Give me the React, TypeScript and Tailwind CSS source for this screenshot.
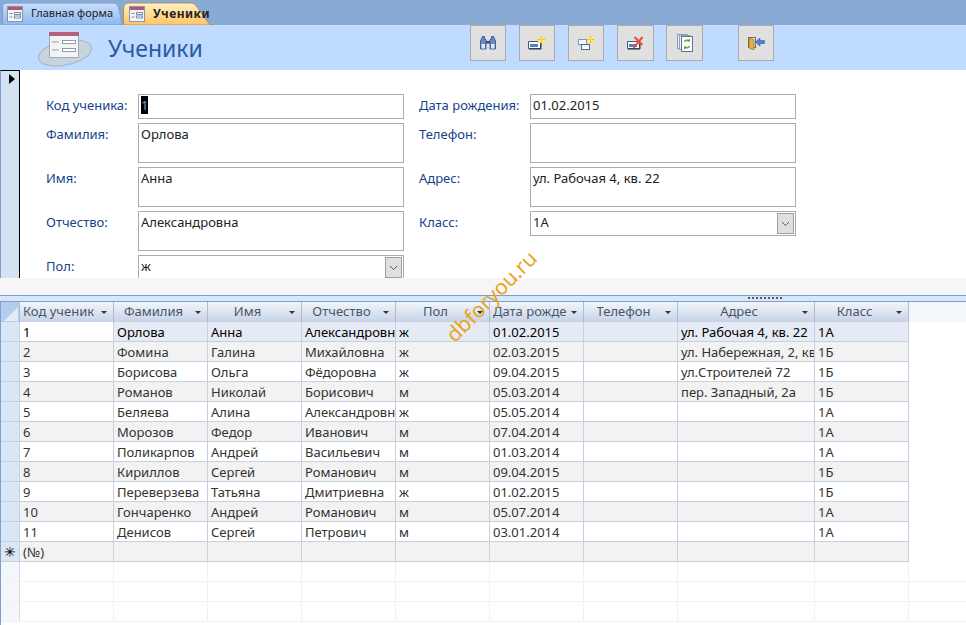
const font = { fontFamily: '"Noto Sans", sans-serif' };

const columns = [
  { title: "Код ученик", w: "w-[94px]", left: true },
  { title: "Фамилия", w: "w-[94px]" },
  { title: "Имя", w: "w-[94px]" },
  { title: "Отчество", w: "w-[94px]" },
  { title: "Пол", w: "w-[94px]" },
  { title: "Дата рожде", w: "w-[94px]", left: true },
  { title: "Телефон", w: "w-[94px]" },
  { title: "Адрес", w: "w-[137px]" },
  { title: "Класс", w: "w-[94px]" },
];

const rows = [
  ["1", "Орлова", "Анна", "Александровна", "ж", "01.02.2015", "", "ул. Рабочая 4, кв. 22", "1А"],
  ["2", "Фомина", "Галина", "Михайловна", "ж", "02.03.2015", "", "ул. Набережная, 2, кв. 5", "1Б"],
  ["3", "Борисова", "Ольга", "Фёдоровна", "ж", "09.04.2015", "", "ул.Строителей 72", "1Б"],
  ["4", "Романов", "Николай", "Борисович", "м", "05.03.2014", "", "пер. Западный, 2а", "1Б"],
  ["5", "Беляева", "Алина", "Александровна", "ж", "05.05.2014", "", "", "1А"],
  ["6", "Морозов", "Федор", "Иванович", "м", "07.04.2014", "", "", "1А"],
  ["7", "Поликарпов", "Андрей", "Васильевич", "м", "01.03.2014", "", "", "1А"],
  ["8", "Кириллов", "Сергей", "Романович", "м", "09.04.2015", "", "", "1Б"],
  ["9", "Переверзева", "Татьяна", "Дмитриевна", "ж", "01.02.2015", "", "", "1Б"],
  ["10", "Гончаренко", "Андрей", "Романович", "м", "05.07.2014", "", "", "1А"],
  ["11", "Денисов", "Сергей", "Петрович", "м", "03.01.2014", "", "", "1А"],
];

function FormIcon({ size = 16 }: { size?: number }) {
  return (
    <svg width={size} height={size} viewBox="0 0 16 16">
      <rect x="0.5" y="0.5" width="15" height="15" fill="#f4f5f8" stroke="#8d93a8" />
      <rect x="1" y="1" width="14" height="3" fill="#b3566f" />
      <path d="M2.5 7.5h3M2.5 11h3" stroke="#7d8fa8" />
      <rect x="7.5" y="6.5" width="6" height="2" fill="#fff" stroke="#7d8fa8" />
      <rect x="7.5" y="10" width="6" height="2" fill="#fff" stroke="#7d8fa8" />
    </svg>
  );
}

function BigFormIcon() {
  return (
    <svg width="56" height="38" viewBox="0 0 56 38" className="shrink-0">
      <ellipse cx="27" cy="22" rx="27" ry="12" transform="rotate(-12 27 22)" fill="#c9d3df" stroke="#a9b3bf" />
      <rect x="11.5" y="1.5" width="29" height="25" fill="#f3f4f6" stroke="#a3a7b4" />
      <rect x="11" y="1" width="30" height="4" fill="#b8607a" />
      <path d="M14 11h7M14 19h7" stroke="#8f9db0" />
      <rect x="24.5" y="9.5" width="13" height="3" fill="#fff" stroke="#8f9db0" />
      <rect x="24.5" y="17.5" width="13" height="3" fill="#fff" stroke="#8f9db0" />
    </svg>
  );
}

function Binoculars() {
  return (
    <svg width="16" height="14" viewBox="0 0 16 14">
      <path d="M2.500 0.500h2v3h1.500v9.500H0.500V5z" fill="#6d8cc2" stroke="#2f4a80" strokeWidth="0.8" />
      <path d="M11.500 0.500h2l2 4.500v8H10V3.500h1.500z" fill="#6d8cc2" stroke="#2f4a80" strokeWidth="0.8" />
      <rect x="1.500" y="8" width="3.500" height="4.500" fill="#dfe9f8" />
      <rect x="11" y="8" width="3.500" height="4.500" fill="#dfe9f8" />
      <rect x="6" y="5" width="4" height="2.500" fill="#2f4a80" />
    </svg>
  );
}

function Spark({ x, y }: { x: number; y: number }) {
  return (
    <g transform={`translate(${x} ${y})`}>
      <rect x="0" y="0" width="7" height="7" fill="#fbe67a" />
      <path d="M3.500 0v7M0 3.500h7" stroke="#e9bb3c" strokeWidth="1" />
      <path d="M1 1l5 5M6 1l-5 5" stroke="#fff6c0" strokeWidth="0.7" />
    </g>
  );
}

function NewRecord() {
  return (
    <svg width="18" height="14" viewBox="0 0 18 14">
      <path d="M0.500 5.500h12v7H0.500z" fill="#fff" stroke="#44597f" />
      <rect x="2" y="8" width="8" height="3" fill="#4f81c7" />
      <path d="M13 6v7H1" fill="none" stroke="#20304f" />
      <Spark x={10} y={0} />
    </svg>
  );
}

function NewObject() {
  return (
    <svg width="16" height="15" viewBox="0 0 16 15">
      <rect x="0.500" y="3.500" width="8" height="5" fill="#f4f7fb" stroke="#8499b8" />
      <rect x="3.500" y="8.500" width="8" height="5" fill="#f4f7fb" stroke="#4e6a92" />
      <Spark x={9} y={0} />
    </svg>
  );
}

function DeleteRecord() {
  return (
    <svg width="17" height="14" viewBox="0 0 17 14">
      <path d="M0.500 5.500h12v7H0.500z" fill="#fff" stroke="#44597f" />
      <rect x="2" y="8" width="8" height="3" fill="#4f81c7" />
      <path d="M13 6v7H1" fill="none" stroke="#20304f" />
      <path d="M7.500 1l8 8M15.500 1l-9 11" stroke="#ef4a3a" strokeWidth="2" />
    </svg>
  );
}

function RefreshDocs() {
  return (
    <svg width="16" height="18" viewBox="0 0 16 18">
      <rect x="0.500" y="0.500" width="10" height="14" fill="#e6edf6" stroke="#8fa0b8" />
      <rect x="2.500" y="1.500" width="10" height="14" fill="#eef3f9" stroke="#8fa0b8" />
      <rect x="4.500" y="2.500" width="11" height="15" fill="#fff" stroke="#5f7390" />
      <path d="M7.500 8a3 3 0 0 1 5-1M12.500 12a3 3 0 0 1-5 1" fill="none" stroke="#5b9a2f" strokeWidth="1.300" />
      <path d="M13 4.500v3h-3zM7 15.500v-3h3z" fill="#5b9a2f" />
    </svg>
  );
}

function ExitDoor() {
  return (
    <svg width="17" height="14" viewBox="0 0 17 14">
      <rect x="0.500" y="1.500" width="7" height="10" fill="#f3f0e4" stroke="#6d6a60" />
      <path d="M1 2l5 1.500V14l-5-2z" fill="#e6ae3e" stroke="#8d6a1e" strokeWidth="0.6" />
      <path d="M16.500 4.500H12V2L7.500 6 12 10V7.500h4.500z" fill="#4f7fd6" stroke="#2f5bb0" strokeWidth="0.6" />
    </svg>
  );
}

function ToolButton({ children, className = "" }: { children: React.ReactNode; className?: string }) {
  return (
    <button className={`flex h-9 w-9 shrink-0 items-center justify-center border border-[#aaaaaa] bg-[#e0e0e0] ${className}`}>
      {children}
    </button>
  );
}

function Field({ label, value, h = "h-[40px]", combo, caret, w = "w-[92px]" }: { label: string; value: string; h?: string; combo?: boolean; caret?: boolean; w?: string }) {
  return (
    <div className="flex shrink-0">
      <div className={`${w} shrink-0 pt-[2px] text-[13px] leading-[18px] text-[#15428b]`}>{label}</div>
      <div className={`relative flex ${h} w-[266px] shrink-0 items-start border border-[#ababab] bg-white px-[2px] pt-[1px] text-[13px] leading-[18px] text-[#222]`}>
        {caret ? <span className="bg-black text-[#6aa5e8]">{value}</span> : value}
        {combo && (
          <span className="absolute right-[1px] top-[1px] flex h-[21px] w-[17px] items-center justify-center border border-[#a0a0a0] bg-[#e0e0e0]">
            <svg width="9" height="6" viewBox="0 0 9 6"><path d="M1 1l3.500 3.500L8 1" fill="none" stroke="#555" /></svg>
          </span>
        )}
      </div>
    </div>
  );
}

function HeaderCell({ title, w, left }: { title: string; w: string; left?: boolean }) {
  return (
    <div className={`relative flex h-[20px] ${w} shrink-0 items-center overflow-hidden border-r border-[#a9bdd6] bg-gradient-to-b from-[#f2f6fb] to-[#c6d3e6] text-[13px] text-[#4a5568] ${left ? "pl-[3px] pr-[16px]" : "justify-center pr-[14px]"}`}>
      <span className="overflow-hidden whitespace-nowrap">{title}</span>
      <span className="absolute right-[6px] top-[9px] h-0 w-0 border-x-[3px] border-t-[3px] border-x-transparent border-t-[#333]" />
    </div>
  );
}

function Row({ cells, index }: { cells: string[]; index: number }) {
  const first = index === 0;
  const bg = first ? "bg-[#e6eaf4]" : index % 2 === 1 ? "bg-[#f2f2f2]" : "bg-white";
  return (
    <div className="flex h-[20px] shrink-0">
      <div className="h-[20px] w-[19px] shrink-0 border-b border-r border-[#c5d0e2] bg-[#dbe6f4]" />
      {cells.map((c, i) => (
        <div
          key={i}
          className={`h-[20px] ${columns[i].w} shrink-0 overflow-hidden whitespace-nowrap border-b border-r border-[#c5d0e2] pl-[3px] text-[13px] leading-[20px] ${first ? "text-black" : "text-[#333]"} ${first && i === 0 ? "bg-white" : bg}`}
        >
          {c}
        </div>
      ))}
    </div>
  );
}

function EmptyRow() {
  return (
    <div className="flex h-[20px] shrink-0 border-b border-[#f0f1f5]">
      <div className="w-[19px] shrink-0 border-r border-[#d5dce8] bg-[#f3f6fb]" />
      {columns.map((c, i) => (
        <div key={i} className={`${c.w} shrink-0 border-r border-[#f0f1f5]`} />
      ))}
    </div>
  );
}

export default function App() {
  return (
    <div className="relative flex h-[625px] w-[966px] flex-col overflow-hidden bg-white" style={font}>
      {/* tabs */}
      <div className="flex h-[25px] shrink-0 items-end bg-[#8aaad6] pl-[2px]">
        <div className="relative flex h-[23px] w-[121px] items-center gap-[8px] pl-[5px] text-[11px] text-[#222]">
          <svg className="absolute inset-0" width="121" height="23" viewBox="0 0 121 23">
            <defs>
              <linearGradient id="t1" x1="0" y1="0" x2="0" y2="1">
                <stop offset="0" stopColor="#c9defa" />
                <stop offset="1" stopColor="#8db8f0" />
              </linearGradient>
            </defs>
            <path d="M0.500 23V5a4 4 0 0 1 4-4H112q3 0 4.500 4l4 18z" fill="url(#t1)" stroke="#7c9ccc" />
          </svg>
          <span className="relative"><FormIcon /></span>
          <span className="relative whitespace-nowrap">Главная форма</span>
        </div>
        <div className="relative flex h-[23px] w-[92px] items-center gap-[8px] pl-[6px] text-[12px] font-bold tracking-[0.5px] text-[#222]">
          <svg className="absolute inset-0" width="92" height="23" viewBox="0 0 92 23">
            <defs>
              <linearGradient id="t2" x1="0" y1="0" x2="0" y2="1">
                <stop offset="0" stopColor="#fff0c4" />
                <stop offset="1" stopColor="#fdc565" />
              </linearGradient>
            </defs>
            <path d="M0.500 23V6a5 5 0 0 1 5-5H68q4 0 6 4l10 14q2 4 6 4z" fill="url(#t2)" stroke="#b0915a" />
          </svg>
          <span className="relative"><FormIcon /></span>
          <span className="relative whitespace-nowrap">Ученики</span>
        </div>
      </div>

      {/* form header */}
      <div className="flex h-[45px] shrink-0 items-start bg-[#bfdbff] pl-[38px]">
        <div className="mt-[6px]"><BigFormIcon /></div>
        <h1 className="ml-[14px] mt-[6px] w-[362px] shrink-0 text-[23px] leading-[34px] text-[#2a5aa5]">Ученики</h1>
        <div className="flex">
          <ToolButton><Binoculars /></ToolButton>
          <ToolButton className="ml-[13px]"><NewRecord /></ToolButton>
          <ToolButton className="ml-[13px]"><NewObject /></ToolButton>
          <ToolButton className="ml-[13px] !w-[37px]"><DeleteRecord /></ToolButton>
          <ToolButton className="ml-[12px] !w-[37px]"><RefreshDocs /></ToolButton>
          <ToolButton className="ml-[35px]"><ExitDoor /></ToolButton>
        </div>
      </div>

      {/* form detail */}
      <div className="flex h-[208px] shrink-0 overflow-hidden">
        <div className="w-[20px] shrink-0 border-l border-r border-t border-l-[#7f9fcc] border-r-black border-t-black bg-[#d5e2f1] pl-[8px] pt-[3px]">
          <div className="h-0 w-0 border-y-[5px] border-l-[6px] border-y-transparent border-l-black" />
        </div>
        <div className="flex gap-[15px] pl-[26px] pt-[24px]">
          <div className="flex flex-col gap-[4px]">
            <Field label="Код ученика:" value="1" h="h-[25px]" caret />
            <Field label="Фамилия:" value="Орлова" />
            <Field label="Имя:" value="Анна" />
            <Field label="Отчество:" value="Александровна" />
            <Field label="Пол:" value="ж" h="h-[25px]" combo />
          </div>
          <div className="flex flex-col gap-[4px]">
            <Field label="Дата рождения:" value="01.02.2015" h="h-[25px]" w="w-[111px]" />
            <Field label="Телефон:" value="" w="w-[111px]" />
            <Field label="Адрес:" value="ул. Рабочая 4, кв. 22" w="w-[111px]" />
            <Field label="Класс:" value="1А" h="h-[25px]" combo w="w-[111px]" />
          </div>
        </div>
      </div>

      {/* splitter */}
      <div className="h-[18px] shrink-0 border-b border-[#7f9fcc] bg-[#f6f6f6]" />
      <div className="relative h-[6px] shrink-0 border-b border-[#7f9fcc] bg-[#d6e6fb]">
        <div className="absolute left-[748px] top-[1px] h-[2px] w-[34px] border-t-2 border-dotted border-[#555]" />
      </div>

      {/* datasheet */}
      <div className="flex min-h-0 flex-1 flex-col overflow-hidden border-l border-[#7f9fcc]">
        <div className="flex h-[20px] shrink-0 bg-[#f4f7fc]">
          <div className="relative h-[20px] w-[19px] shrink-0 overflow-hidden border-r border-[#a9bdd6] bg-[#b4cdec]">
            <div className="absolute bottom-[1px] right-[1px] h-0 w-0 border-b-[14px] border-l-[14px] border-b-[#e4ebf5] border-l-transparent" />
          </div>
          {columns.map((c) => (
            <HeaderCell key={c.title} title={c.title} w={c.w} left={c.left} />
          ))}
        </div>
        {rows.map((cells, i) => (
          <Row key={cells[0]} cells={cells} index={i} />
        ))}
        <div className="flex h-[20px] shrink-0">
          <div className="flex w-[19px] shrink-0 items-center justify-center border-b border-r border-[#c5d0e2] bg-[#dbe6f4] text-[14px] leading-none text-black">✳</div>
          {columns.map((c, i) => (
            <div key={i} className={`${c.w} shrink-0 border-b border-r border-[#c5d0e2] bg-[#f2f2f2] pl-[3px] text-[13px] leading-[20px] text-[#333]`}>
              {i === 0 ? "(№)" : ""}
            </div>
          ))}
        </div>
        <EmptyRow />
        <EmptyRow />
        <EmptyRow />
      </div>

      {/* watermark */}
      <div className="absolute left-[429px] top-[282px] w-[124px] -rotate-45 whitespace-nowrap text-center text-[21px] leading-[28px] text-[#eaa520]">
        dbforyou.ru
      </div>
    </div>
  );
}
